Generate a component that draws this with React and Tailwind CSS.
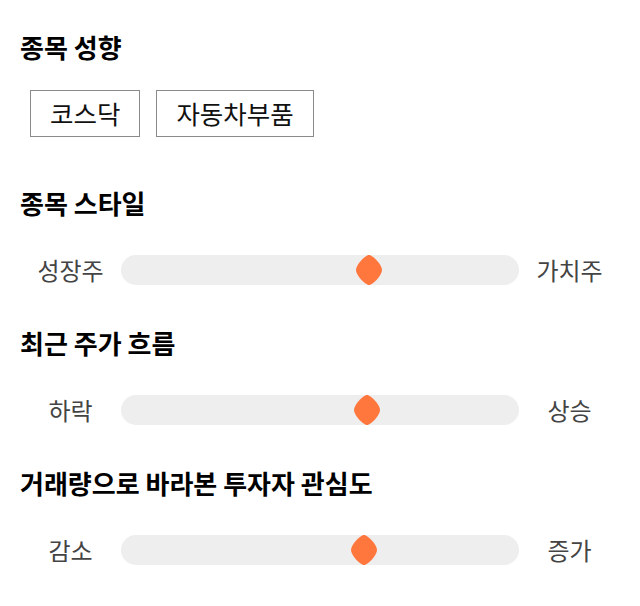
const tags = ["코스닥", "자동차부품"];

const sliders = [
  { title: "종목 스타일", left: "성장주", right: "가치주", pos: 248 },
  { title: "최근 주가 흐름", left: "하락", right: "상승", pos: 246 },
  { title: "거래량으로 바라본 투자자 관심도", left: "감소", right: "증가", pos: 243 },
];

const Thumb = () => (
  <svg width="26" height="30" viewBox="0 0 26 30" className="block">
    <path
      d="M13 0 C17 0 26 10 26 15 C26 20 17 30 13 30 C9 30 0 20 0 15 C0 10 9 0 13 0Z"
      fill="#ff773d"
    />
  </svg>
);

const App = () => {
  return (
    <div
      className="w-[640px] h-[606px] bg-white pt-[31px]"
      style={{ fontFamily: '"Noto Sans CJK KR", "Noto Sans", sans-serif' }}
    >
      {/* 종목 성향 */}
      <h2 className="px-5 text-[26px] leading-[32px] font-bold text-black">종목 성향</h2>
      <div className="flex gap-4 px-[30px] mt-[27px]">
        {tags.map((t) => (
          <div
            key={t}
            className="h-[47px] px-[19px] flex items-center border border-[#8a8a8a] text-[25.5px] text-[#111]"
          >
            {t}
          </div>
        ))}
      </div>

      {sliders.map((s, i) => (
        <div key={s.title} className={i === 0 ? "mt-[50px]" : "mt-[42px]"}>
          <h2 className="px-5 text-[26px] leading-[32px] font-bold text-black">{s.title}</h2>
          <div className="flex items-center px-5 mt-[36px] h-[30px]">
            <div className="w-[101px] text-center text-[24px] text-[#444]">{s.left}</div>
            <div className="relative flex-1 h-[30px] rounded-full bg-[#eeeeee]">
              <div className="absolute top-0" style={{ left: s.pos - 13 }}>
                <Thumb />
              </div>
            </div>
            <div className="w-[101px] text-center text-[24px] text-[#444]">{s.right}</div>
          </div>
        </div>
      ))}
    </div>
  );
};

export default App;
